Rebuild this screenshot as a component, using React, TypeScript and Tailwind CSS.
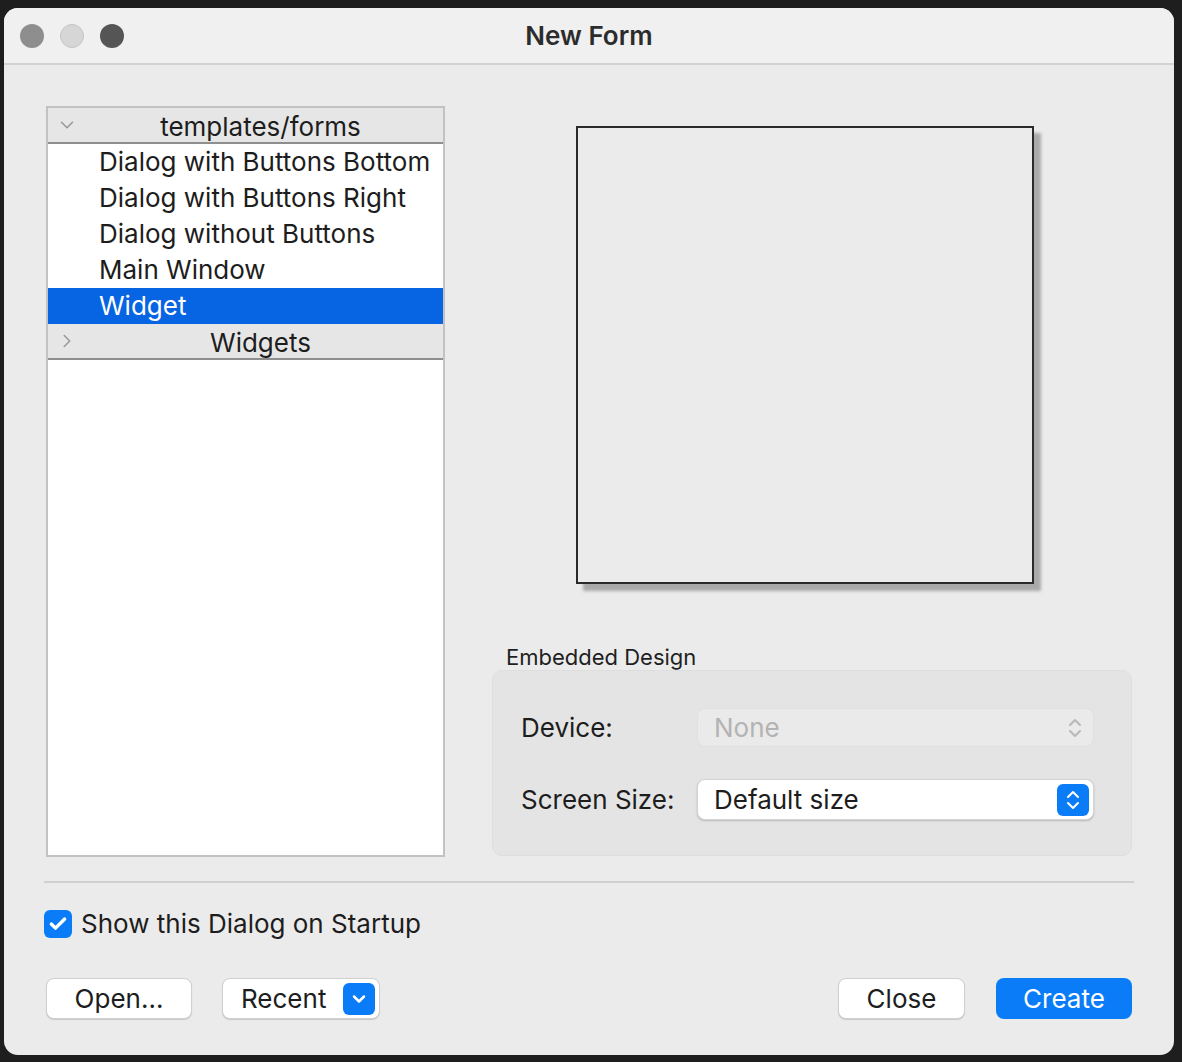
import { Check, ChevronDown, ChevronRight } from 'lucide-react';

const font = { fontFamily: 'Inter, "Liberation Sans", sans-serif' };

const items = ['Dialog with Buttons Bottom', 'Dialog with Buttons Right', 'Dialog without Buttons', 'Main Window', 'Widget'];

function Stepper({ disabled }: { disabled?: boolean }) {
  return (
    <svg viewBox="0 0 16 22" className="h-[22px] w-[16px]" fill="none" stroke={disabled ? '#b8b8b8' : '#ffffff'} strokeWidth={2} strokeLinecap="round" strokeLinejoin="round">
      <path d="M3 8l5-5 5 5" />
      <path d="M3 14l5 5 5-5" />
    </svg>
  );
}

function TreeHeader({ open, label }: { open?: boolean; label: string }) {
  return (
    <div className="relative flex h-[36px] items-center justify-center border-b-2 border-[#8e8e8e] bg-[#e6e6e6] pl-[30px] pt-[4px] text-[26px] text-[#1d1d1d]">
      <span className="absolute left-[8px] top-[6px] text-[#9a9a9a]">
        {open ? <ChevronDown className="h-[22px] w-[22px]" strokeWidth={1.75} /> : <ChevronRight className="h-[22px] w-[22px]" strokeWidth={1.75} />}
      </span>
      <span className="leading-none">{label}</span>
    </div>
  );
}

export default function App() {
  return (
    <div className="h-[1062px] w-[1182px] bg-[#1e1e1e] pl-[4px] pt-[8px]" style={font}>
      <div className="flex h-[1047px] w-[1170px] flex-col overflow-hidden rounded-[14px] bg-[#ebebeb]">
        {/* title bar */}
        <div className="relative flex h-[57px] shrink-0 items-center justify-center border-b-2 border-[#d2d2d2] bg-[#f0f0f0]">
          <div className="absolute left-[16px] top-[16px] flex gap-[16px]">
            <span className="h-[24px] w-[24px] rounded-full bg-[#8e8e8e]" />
            <span className="h-[24px] w-[24px] rounded-full border border-[#c4c4c4] bg-[#d6d6d6]" />
            <span className="h-[24px] w-[24px] rounded-full bg-[#555555]" />
          </div>
          <span className="text-[26px] font-semibold text-[#2c2c2c]">New Form</span>
        </div>

        {/* body */}
        <div className="flex flex-1 flex-col px-[40px]">
          <div className="mt-[41px] flex">
            {/* template tree */}
            <div className="ml-[2px] flex h-[751px] w-[399px] shrink-0 flex-col border-2 border-[#c2c2c2] bg-white">
              <TreeHeader open label="templates/forms" />
              {items.map((it) => (
                <div
                  key={it}
                  className={`flex h-[36px] items-center pl-[51px] text-[26px] leading-none ${
                    it === 'Widget' ? 'bg-[#0764e3] text-white' : 'text-[#1d1d1d]'
                  }`}
                >
                  {it}
                </div>
              ))}
              <TreeHeader label="Widgets" />
            </div>

            {/* right column */}
            <div className="flex flex-1 flex-col pl-[47px]">
              <div className="ml-[84px] mt-[20px] h-[458px] w-[458px] border-2 border-[#2a2a2a] bg-[#ebebeb] shadow-[7px_7px_3px_rgba(0,0,0,0.28)]" />

              <p className="ml-[14px] mt-[62px] text-[22px] leading-none text-[#1f1f1f]">Embedded Design</p>
              <div className="mt-[2px] flex h-[186px] w-[640px] flex-col gap-[32px] rounded-[10px] border border-[#dedede] bg-[#e4e4e4] pl-[28px] pr-[37px] pt-[37px]">
                <div className="flex items-center">
                  <span className="w-[176px] text-[26px] text-[#1d1d1d]">Device:</span>
                  <div className="flex h-[39px] flex-1 items-center justify-between rounded-[8px] border border-[#e0e0e0] bg-[#eaeaea] pl-[16px] pr-[10px]">
                    <span className="text-[26px] text-[#b3b3b3]">None</span>
                    <Stepper disabled />
                  </div>
                </div>
                <div className="flex items-center">
                  <span className="w-[176px] text-[26px] text-[#1d1d1d]">Screen Size:</span>
                  <div className="flex h-[41px] flex-1 items-center justify-between rounded-[8px] border border-[#d4d4d4] bg-white pl-[16px] pr-[4px] shadow-[0_1px_2px_rgba(0,0,0,0.2)]">
                    <span className="text-[26px] text-[#1d1d1d]">Default size</span>
                    <span className="flex h-[32px] w-[32px] items-center justify-center rounded-[6px] bg-[#0a7cf7]">
                      <Stepper />
                    </span>
                  </div>
                </div>
              </div>
            </div>
          </div>

          <div className="mt-[24px] h-[2px] w-full bg-[#d0d0d0]" />

          <label className="mt-[27px] flex h-[28px] items-center gap-[9px]">
            <span className="flex h-[28px] w-[28px] items-center justify-center rounded-[6px] bg-[#0a7cf7]">
              <Check className="h-[20px] w-[20px] text-white" strokeWidth={4} />
            </span>
            <span className="text-[26px] leading-none text-[#1d1d1d]">Show this Dialog on Startup</span>
          </label>

          <div className="mt-[40px] flex items-center">
            <button className="ml-[2px] flex h-[41px] w-[146px] items-center justify-center rounded-[8px] border border-[#d0d0d0] bg-white text-[26px] leading-none text-[#1d1d1d] shadow-[0_1px_1px_rgba(0,0,0,0.15)]">
              Open...
            </button>
            <button className="ml-[30px] flex h-[41px] w-[158px] items-center justify-between rounded-[8px] border border-[#d0d0d0] bg-white pl-[18px] pr-[4px] text-[26px] leading-none text-[#1d1d1d] shadow-[0_1px_1px_rgba(0,0,0,0.15)]">
              Recent
              <span className="flex h-[32px] w-[32px] items-center justify-center rounded-[6px] bg-[#0a7cf7]">
                <ChevronDown className="h-[20px] w-[20px] text-white" strokeWidth={3} />
              </span>
            </button>
            <div className="flex-1" />
            <button className="flex h-[41px] w-[127px] items-center justify-center rounded-[8px] border border-[#d0d0d0] bg-white text-[26px] leading-none text-[#1d1d1d] shadow-[0_1px_1px_rgba(0,0,0,0.15)]">
              Close
            </button>
            <button className="ml-[31px] mr-[2px] flex h-[41px] w-[136px] items-center justify-center rounded-[8px] bg-[#0a7cf7] text-[26px] leading-none text-white">
              Create
            </button>
          </div>
        </div>
      </div>
    </div>
  );
}
